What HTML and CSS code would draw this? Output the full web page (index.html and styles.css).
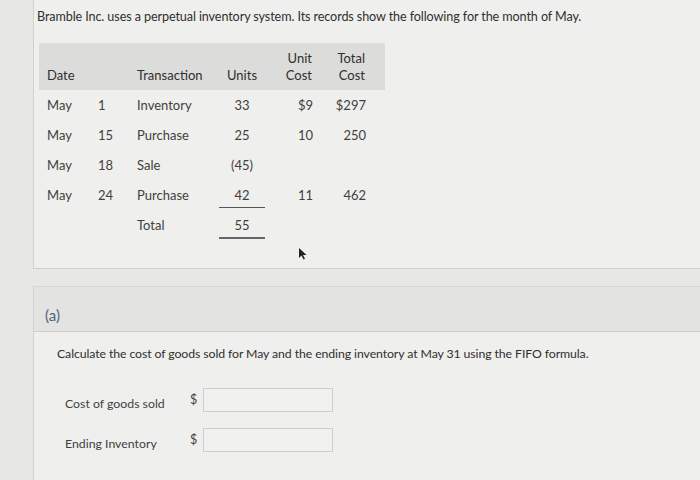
FILE: index.html
```html
<!DOCTYPE html>
<html>
<head>
<meta charset="utf-8">
<link rel="stylesheet" href="styles.css">
</head>
<body>
<div class="main">
  <section class="panel intro">
    <p class="lead">Bramble Inc. uses a perpetual inventory system. Its records show the following for the month of May.</p>
    <table class="inv">
      <thead>
        <tr>
          <th class="c-date">Date</th>
          <th class="c-day"></th>
          <th class="c-tr">Transaction</th>
          <th class="c-units">Units</th>
          <th class="c-uc">Unit<br>Cost</th>
          <th class="c-tc">Total<br>Cost</th>
        </tr>
      </thead>
      <tbody>
        <tr><td class="c-date">May</td><td class="c-day">1</td><td class="c-tr">Inventory</td><td class="c-units">33</td><td class="c-uc">$9</td><td class="c-tc">$297</td></tr>
        <tr><td class="c-date">May</td><td class="c-day">15</td><td class="c-tr">Purchase</td><td class="c-units">25</td><td class="c-uc">10</td><td class="c-tc">250</td></tr>
        <tr><td class="c-date">May</td><td class="c-day">18</td><td class="c-tr">Sale</td><td class="c-units">(45)</td><td class="c-uc"></td><td class="c-tc"></td></tr>
        <tr><td class="c-date">May</td><td class="c-day">24</td><td class="c-tr">Purchase</td><td class="c-units"><span class="rule single">42</span></td><td class="c-uc">11</td><td class="c-tc">462</td></tr>
        <tr><td class="c-date"></td><td class="c-day"></td><td class="c-tr">Total</td><td class="c-units"><span class="rule double">55</span></td><td class="c-uc"></td><td class="c-tc"></td></tr>
      </tbody>
    </table>
    <svg class="cursor" width="9" height="12" viewBox="0 0 9 12"><path d="M1 0 L1 10 L3.5 7.5 L5.5 11.5 L7 10.8 L5 7 L8.5 7 Z" fill="#222"/></svg>
  </section>

  <div class="part-head"><span class="part-label">(a)</span></div>

  <section class="panel answer">
    <p class="question">Calculate the cost of goods sold for May and the ending inventory at May 31 using the FIFO formula.</p>
    <div class="fields">
      <div class="field">
        <span class="field-label">Cost of goods sold</span>
        <span class="cur">$</span>
        <span class="box"></span>
      </div>
      <div class="field">
        <span class="field-label">Ending Inventory</span>
        <span class="cur">$</span>
        <span class="box"></span>
      </div>
    </div>
  </section>
</div>
</body>
</html>
```

FILE: styles.css
```css
html, body {
  margin: 0;
  padding: 0;
}
body {
  width: 700px;
  height: 480px;
  overflow: hidden;
  background: #e7e7e5;
  font-family: Lato, "Open Sans", sans-serif;
  color: #333;
}
.main {
  margin-left: 33px;
}
.panel {
  background: #efefed;
  border-left: 1px solid #d2d2d0;
}
.intro {
  position: relative;
  height: 269px;
  box-sizing: border-box;
  padding: 9px 0 0 3px;
  border-bottom: 1px solid #cfcfcd;
}
.lead {
  margin: 0;
  font-size: 12.6px;
  line-height: 16px;
  letter-spacing: -0.1px;
  color: #2f2f2f;
}
.inv {
  margin-top: 18px;
  margin-left: 2px;
  border-collapse: collapse;
  font-size: 13px;
}
.inv th {
  background: #dcdcda;
  font-weight: normal;
  height: 47px;
  box-sizing: border-box;
  vertical-align: bottom;
  padding-bottom: 6px;
  line-height: 17px;
  color: #2f2f2f;
}
.inv td {
  height: 30px;
  padding-top: 0;
  padding-bottom: 0;
  line-height: 18px;
  color: #3f3f3f;
}
.c-date { width: 51px; box-sizing: border-box; padding-left: 8px; text-align: left; }
.c-day { width: 39px; box-sizing: border-box; padding-left: 8px; text-align: left; }
.c-tr { width: 84px; box-sizing: border-box; padding-left: 8px; text-align: left; }
.c-units { width: 58px; box-sizing: border-box; text-align: center; }
.c-uc { width: 52px; box-sizing: border-box; padding-right: 10px; text-align: right; }
.c-tc { width: 62px; box-sizing: border-box; padding-right: 19px; text-align: right; }
.inv th.c-uc { padding-right: 11px; }
.inv th.c-tc { padding-right: 20px; }
.rule {
  display: inline-block;
  width: 46px;
  padding-bottom: 3px;
  margin-bottom: -5px;
  vertical-align: baseline;
}
.rule.single { border-bottom: 1px solid #555; }
.rule.double { border-bottom: 2px solid #666; margin-bottom: -6px; }
.cursor {
  position: absolute;
  left: 264px;
  top: 248px;
}
.part-head {
  margin-top: 17px;
  height: 46px;
  background: #e3e3e1;
  border-top: 1px solid #d6d6d4;
  border-bottom: 1px solid #cfcfcd;
  border-left: 1px solid #d2d2d0;
  display: flex;
  align-items: flex-end;
  padding-left: 11px;
  padding-bottom: 7px;
  box-sizing: border-box;
}
.part-label {
  font-size: 15px;
  color: #4e6478;
}
.answer {
  height: 150px;
  box-sizing: border-box;
  padding: 14px 0 0 23px;
}
.question {
  margin: 0;
  font-size: 12.3px;
  line-height: 16px;
  letter-spacing: -0.1px;
  color: #2f2f2f;
}
.fields {
  margin-top: 26px;
  padding-left: 8px;
  display: flex;
  flex-direction: column;
  gap: 16px;
}
.field {
  display: flex;
  align-items: flex-end;
  height: 24px;
  font-size: 12.3px;
  color: #3f3f3f;
}
.field-label {
  width: 125px;
  line-height: 16px;
}
.cur {
  width: 13px;
  line-height: 18px;
  align-self: center;
  font-size: 12.5px;
}
.box {
  width: 130px;
  height: 24px;
  box-sizing: border-box;
  border: 1px solid #cdcdcb;
  background: #f1f1ef;
}
```
